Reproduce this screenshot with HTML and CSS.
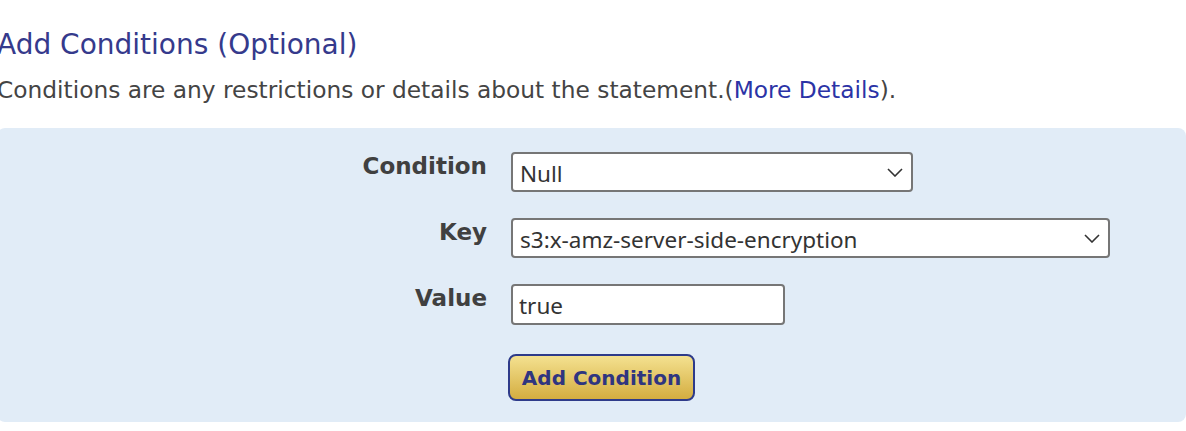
FILE: index.html
```html
<!DOCTYPE html>
<html>
<head>
<meta charset="utf-8">
<link rel="stylesheet" href="styles.css">
</head>
<body>
<div class="page">
  <h2 class="title">Add Conditions (Optional)</h2>
  <p class="desc">Conditions are any restrictions or details about the statement.(<a href="#" class="link">More Details</a>).</p>
  <div class="panel">
    <div class="form">
      <label class="lbl">Condition</label>
      <div class="ctl">
        <div class="selwrap w1">
          <select class="sel"><option>Null</option></select>
          <svg class="chev" width="16" height="9" viewBox="0 0 16 9"><path d="M1 1 L8 8 L15 1" fill="none" stroke="#333" stroke-width="1.6"/></svg>
        </div>
      </div>
      <label class="lbl">Key</label>
      <div class="ctl">
        <div class="selwrap w2">
          <select class="sel"><option>s3:x-amz-server-side-encryption</option></select>
          <svg class="chev" width="16" height="9" viewBox="0 0 16 9"><path d="M1 1 L8 8 L15 1" fill="none" stroke="#333" stroke-width="1.6"/></svg>
        </div>
      </div>
      <label class="lbl">Value</label>
      <div class="ctl">
        <input class="inp" type="text" value="true">
      </div>
      <div></div>
      <div class="ctl btnrow">
        <button class="btn">Add Condition</button>
      </div>
    </div>
  </div>
</div>
</body>
</html>
```
FILE: styles.css
```css
html, body {
  margin: 0;
  padding: 0;
  background: #ffffff;
}
.page {
  margin-left: -3px;
  padding-top: 26px;
  font-family: "DejaVu Sans", Verdana, sans-serif;
}
.title {
  margin: 0;
  font-weight: normal;
  font-size: 28px;
  line-height: 38px;
  color: #353a8c;
  white-space: nowrap;
}
.desc {
  margin: 11px 0 0 0;
  font-size: 23.3px;
  line-height: 30px;
  color: #444444;
  white-space: nowrap;
}
.link {
  color: #2b33a6;
  text-decoration: none;
}
.panel {
  margin-top: 23px;
  background: #e1ecf7;
  border-radius: 8px;
  height: 294px;
  box-sizing: border-box;
  padding-top: 24px;
}
.form {
  display: grid;
  grid-template-columns: 490px auto;
  column-gap: 24px;
  row-gap: 0;
  justify-content: start;
}
.lbl {
  text-align: right;
  font-weight: bold;
  font-size: 23px;
  color: #404040;
  line-height: 28px;
  padding-top: 0;
}
.ctl {
  height: 66px;
}
.selwrap {
  position: relative;
  height: 40px;
}
.w1 { width: 402px; }
.w2 { width: 599px; }
.sel {
  appearance: none;
  -webkit-appearance: none;
  width: 100%;
  height: 40px;
  box-sizing: border-box;
  border: 2px solid #767676;
  border-radius: 4px;
  background: #ffffff;
  font-family: "Noto Sans", "Open Sans", sans-serif;
  font-size: 22.5px;
  color: #333333;
  padding: 2px 30px 0 7px;
}
.chev {
  position: absolute;
  right: 10px;
  top: 16px;
  pointer-events: none;
}
.inp {
  width: 274px;
  height: 41px;
  box-sizing: border-box;
  border: 2px solid #767676;
  border-radius: 4px;
  background: #ffffff;
  font-family: "Noto Sans", "Open Sans", sans-serif;
  font-size: 22.5px;
  color: #333333;
  padding: 2px 7px 0 6px;
  outline: none;
}
.btnrow {
  padding-top: 4px;
  margin-left: -3px;
}
.btn {
  height: 47px;
  width: 187px;
  box-sizing: border-box;
  border: 2px solid #2e3b8a;
  border-radius: 8px;
  background: linear-gradient(#f4e190, #d4ad40);
  font-family: "DejaVu Sans", Verdana, sans-serif;
  font-weight: bold;
  font-size: 20px;
  color: #2f3580;
  padding: 0;
}
```
